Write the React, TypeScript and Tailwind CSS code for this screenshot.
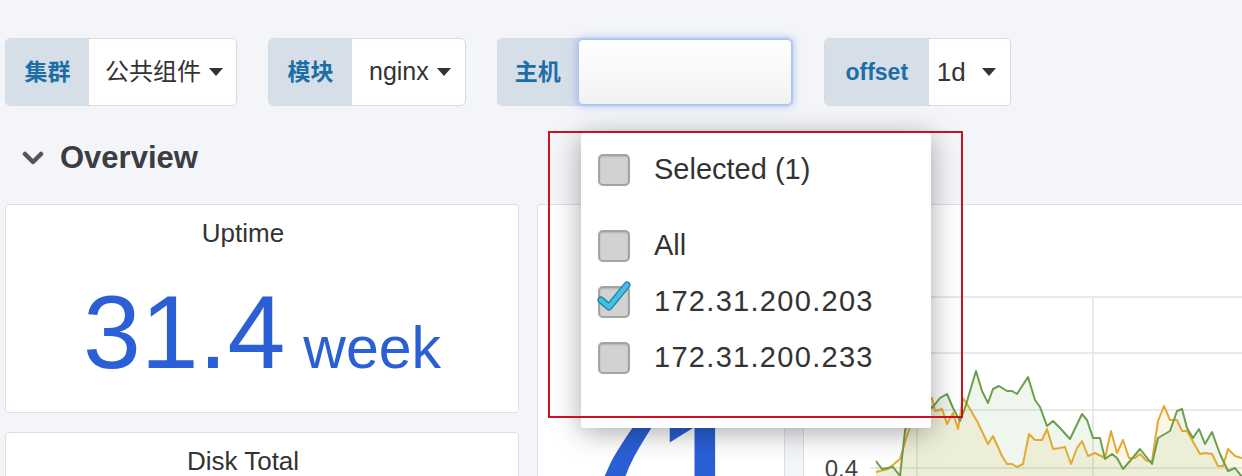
import React from "react";

const font = { fontFamily: '"Liberation Sans", "Noto Sans CJK SC", sans-serif' };

function Caret({ gap = "ml-[8px]" }: { gap?: string }) {
  return (
    <svg width="14" height="8" viewBox="0 0 14 8" className={gap}>
      <path d="M0 0 L14 0 L7 8 Z" fill="#333" />
    </svg>
  );
}

function Label({ children, w }: { children: React.ReactNode; w: string }) {
  return (
    <div className={`flex h-full items-center justify-center bg-[#d6dee7] text-[23px] font-bold text-[#1c6ea6] ${w}`}>
      {children}
    </div>
  );
}

function Checkbox({ checked = false }: { checked?: boolean }) {
  return (
    <div className="relative h-[32px] w-[32px] shrink-0 rounded-[5px] border-2 border-[#a3a3a3] bg-[#d2d2d2] shadow-[inset_0_1px_2px_rgba(0,0,0,0.15)]">
      {checked && (
        <svg width="40" height="34" viewBox="0 0 40 34" className="absolute left-[-4px] top-[-9px]">
          <path d="M5 21 L13 28 L31 6" fill="none" stroke="#1f7fa0" strokeWidth="7" strokeLinecap="round" strokeLinejoin="round" />
          <path d="M5 21 L13 28 L31 6" fill="none" stroke="#3fc0e6" strokeWidth="4.5" strokeLinecap="round" strokeLinejoin="round" />
        </svg>
      )}
    </div>
  );
}

const green: [number, number][] = [
  [876, 460], [882, 468], [893, 466], [900, 475], [905, 430], [912, 402], [920, 396], [932, 407], [940, 397], [947, 393],
  [953, 407], [960, 420], [965, 407], [976, 370], [982, 390], [988, 402], [993, 388], [999, 385], [1007, 390],
  [1012, 390], [1017, 393], [1028, 376], [1035, 399], [1040, 406], [1047, 425], [1053, 420], [1060, 427],
  [1070, 438], [1082, 413], [1087, 419], [1093, 437], [1100, 437], [1105, 458], [1112, 453], [1117, 457],
  [1123, 468], [1130, 460], [1140, 448], [1152, 463], [1158, 437], [1170, 430], [1177, 410], [1182, 408],
  [1187, 427], [1193, 437], [1199, 428], [1205, 443], [1212, 431], [1220, 453], [1228, 470], [1235, 467], [1242, 476],
];

const orange: [number, number][] = [
  [876, 471], [888, 468], [900, 458], [910, 425], [920, 408], [932, 397], [935, 410], [942, 408], [947, 423],
  [953, 412], [958, 428], [963, 397], [967, 403], [977, 420], [988, 443], [993, 435], [1002, 455], [1007, 463],
  [1012, 463], [1017, 466], [1023, 463], [1029, 433], [1035, 439], [1042, 439], [1047, 428], [1053, 448],
  [1060, 447], [1065, 446], [1071, 463], [1077, 447], [1082, 440], [1088, 455], [1095, 452], [1105, 457],
  [1111, 430], [1117, 452], [1123, 439], [1129, 457], [1135, 457], [1140, 453], [1147, 460], [1152, 460],
  [1158, 420], [1164, 405], [1170, 419], [1177, 419], [1182, 430], [1187, 430], [1200, 453], [1205, 452],
  [1212, 453], [1218, 465], [1223, 465], [1228, 448], [1235, 455], [1242, 457],
];

const line = (pts: [number, number][]) => pts.map((p) => p.join(",")).join(" ");
const area = (pts: [number, number][]) => `${line(pts)} 1242,476 876,476`;

function Chart() {
  return (
    <svg width="438" height="272" viewBox="804 204 438 272" className="block">
      {[296, 352, 409, 467].map((y) => (
        <line key={y} x1="870" x2="1242" y1={y} y2={y} stroke="#e2e2e2" strokeWidth="1.5" />
      ))}
      {[917, 1093].map((x) => (
        <line key={x} x1={x} x2={x} y1="296" y2="476" stroke="#e2e2e2" strokeWidth="1.5" />
      ))}
      <polygon points={area(orange)} fill="rgba(234,184,57,0.12)" />
      <polygon points={area(green)} fill="rgba(126,178,109,0.12)" />
      <polyline points={line(orange)} fill="none" stroke="#e5a833" strokeWidth="2" strokeLinejoin="round" />
      <polyline points={line(green)} fill="none" stroke="#6a9f4c" strokeWidth="2" strokeLinejoin="round" />
      <text x="858" y="476" textAnchor="end" fontSize="24" fill="#444" style={font}>
        0.4
      </text>
    </svg>
  );
}

export default function App() {
  return (
    <div className="relative h-[476px] w-[1242px] overflow-hidden bg-[#f4f5f8]" style={font}>
      {/* variable bar */}
      <div className="flex gap-[31px] pl-[5px] pt-[38px]">
        <div className="flex h-[68px] overflow-hidden rounded-[5px] border border-[#d5dce4] bg-white">
          <Label w="w-[83px]">集群</Label>
          <div className="flex items-center pl-[16px] pr-[13px] text-[24px] text-[#333]">
            公共组件
            <Caret />
          </div>
        </div>
        <div className="flex h-[68px] overflow-hidden rounded-[5px] border border-[#d5dce4] bg-white">
          <Label w="w-[83px]">模块</Label>
          <div className="flex items-center pl-[17px] pr-[14px] text-[25px] text-[#333]">
            nginx
            <Caret />
          </div>
        </div>
        <div className="flex h-[68px] rounded-[5px] border border-[#d5dce4] bg-[#d6dee7]">
          <div className="flex w-[80px] items-center justify-center text-[23px] font-bold text-[#1c6ea6]">主机</div>
          <div className="h-full w-[214px] rounded-[5px] border border-[#aac5f3] bg-gradient-to-b from-white to-[#f2f2f2] shadow-[0_0_7px_2px_rgba(120,160,240,0.5)]" />
        </div>
        <div className="flex h-[68px] overflow-hidden rounded-[5px] border border-[#d5dce4] bg-white">
          <Label w="w-[104px]">offset</Label>
          <div className="flex items-center pl-[8px] pr-[14px] text-[26px] text-[#333]">
            1d
            <Caret gap="ml-[16px]" />
          </div>
        </div>
      </div>

      {/* row header */}
      <div className="mt-[32px] flex h-[40px] items-center pl-[22px]">
        <svg width="22" height="14" viewBox="0 0 22 14">
          <path d="M3 3 L11 11 L19 3" fill="none" stroke="#555" strokeWidth="4.5" strokeLinecap="round" strokeLinejoin="round" />
        </svg>
        <span className="ml-[16px] text-[31px] font-bold text-[#3b3d42]">Overview</span>
      </div>

      {/* panels */}
      <div className="mt-[26px] flex gap-[18px] pl-[5px]">
        <div className="flex w-[514px] shrink-0 flex-col gap-[19px]">
          <div className="flex h-[209px] flex-col rounded-[4px] border border-[#dce0e6] bg-white">
            <div className="pr-[38px] pt-[15px] text-center text-[26px] leading-[26px] text-[#333]">Uptime</div>
            <div className="mt-[34px] flex items-baseline justify-center text-[#2a5fd5]">
              <span className="text-[104px] leading-none">31.4</span>
              <span className="ml-[18px] text-[59px] leading-none">week</span>
            </div>
          </div>
          <div className="flex h-[200px] flex-col rounded-[4px] border border-[#dce0e6] bg-white">
            <div className="pr-[38px] pt-[15px] text-center text-[26px] leading-[26px] text-[#333]">Disk Total</div>
          </div>
        </div>
        <div className="flex h-[400px] w-[248px] shrink-0 flex-col overflow-hidden rounded-[4px] border border-[#dce0e6] bg-white">
          <div className="pt-[15px] text-center text-[26px] leading-[26px] text-[#333]">Load</div>
          <div className="mt-[140px] pl-[38px] text-[150px] font-bold leading-none text-[#2a5fd5]">71</div>
        </div>
        <div className="h-[400px] w-[600px] shrink-0 overflow-hidden rounded-[4px] border border-[#dce0e6] bg-white">
          <Chart />
        </div>
      </div>

      {/* host dropdown */}
      <div className="absolute left-[581px] top-[133px] h-[295px] w-[350px] rounded-[3px] bg-white shadow-[0_4px_28px_rgba(0,0,0,0.35)]">
        <div className="flex h-[74px] items-center gap-[24px] pl-[17px] text-[29px] text-[#333]">
          <Checkbox />
          <span>Selected (1)</span>
        </div>
        <div className="mt-[11px] flex h-[56px] items-center gap-[24px] pl-[17px] text-[29px] text-[#333]">
          <Checkbox />
          <span>All</span>
        </div>
        <div className="flex h-[56px] items-center gap-[24px] pl-[17px] text-[29px] tracking-[1.3px] text-[#333]">
          <Checkbox checked />
          <span>172.31.200.203</span>
        </div>
        <div className="flex h-[56px] items-center gap-[24px] pl-[17px] text-[29px] tracking-[1.3px] text-[#333]">
          <Checkbox />
          <span>172.31.200.233</span>
        </div>
      </div>

      {/* annotation */}
      <div className="absolute left-[548px] top-[131px] h-[287px] w-[415px] border-2 border-[#cc1122]" />
    </div>
  );
}
